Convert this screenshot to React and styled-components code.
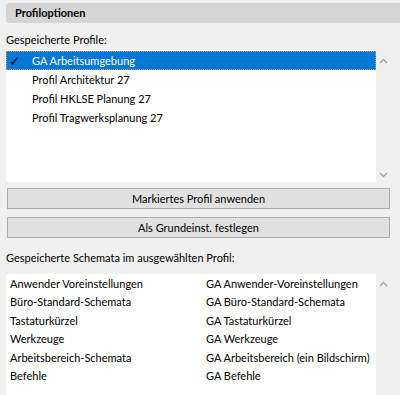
import React from 'react'
import styled, { createGlobalStyle } from 'styled-components'

const GlobalStyle = createGlobalStyle`
  html, body {
    margin: 0;
    background: #f0f0f0;
  }
  body {
    font-family: Lato, "Noto Sans", sans-serif;
    font-size: 11px;
    color: #000;
  }
`

const profiles = [
  'GA Arbeitsumgebung',
  'Profil Architektur 27',
  'Profil HKLSE Planung 27',
  'Profil Tragwerksplanung 27',
]

const schemes = [
  ['Anwender Voreinstellungen', 'GA Anwender-Voreinstellungen'],
  ['Büro-Standard-Schemata', 'GA Büro-Standard-Schemata'],
  ['Tastaturkürzel', 'GA Tastaturkürzel'],
  ['Werkzeuge', 'GA Werkzeuge'],
  ['Arbeitsbereich-Schemata', 'GA Arbeitsbereich (ein Bildschirm)'],
  ['Befehle', 'GA Befehle'],
]

function Chevron({ up }) {
  return (
    <svg width="9" height="6" viewBox="0 0 9 6">
      <path
        d={up ? 'M1 5 L4.5 1.5 L8 5' : 'M1 1 L4.5 4.5 L8 1'}
        fill="none"
        stroke="#a6a6a6"
        strokeWidth="1.4"
      />
    </svg>
  )
}

function App() {
  return (
    <>
      <GlobalStyle />
      <Panel>
        <Header>Profiloptionen</Header>
        <Label>Gespeicherte Profile:</Label>
        <ListFrame height={131}>
          <List>
            {profiles.map((p, i) => (
              <ProfileRow key={p} selected={i === 0}>
                <Check>{i === 0 ? '✓' : ''}</Check>
                {p}
              </ProfileRow>
            ))}
          </List>
          <ScrollBar>
            <Chevron up />
            <Chevron />
          </ScrollBar>
        </ListFrame>
        <Buttons>
          <Button>Markiertes Profil anwenden</Button>
          <Button>Als Grundeinst. festlegen</Button>
        </Buttons>
        <Label second>Gespeicherte Schemata im ausgewählten Profil:</Label>
        <ListFrame height={130} gap={5}>
          <SchemeList>
            {schemes.map(([a, b]) => (
              <React.Fragment key={a}>
                <SchemeCell>{a}</SchemeCell>
                <SchemeCell>{b}</SchemeCell>
              </React.Fragment>
            ))}
          </SchemeList>
          <ScrollBar>
            <Chevron up />
          </ScrollBar>
        </ListFrame>
      </Panel>
    </>
  )
}

export default App

const Panel = styled.div`
  width: 400px;
  height: 395px;
  overflow: hidden;
  padding: 3px 0 0 6px;
  box-sizing: border-box;
`

const Header = styled.div`
  height: 20px;
  background: #d5d5d5;
  border-radius: 3px 0 0 3px;
  font-weight: 700;
  line-height: 19px;
  padding-left: 9px;
`

const Label = styled.div`
  margin-top: ${p => (p.second ? '12px' : '9px')};
  height: 19px;
  line-height: 16px;
`

const ListFrame = styled.div`
  display: flex;
  height: ${p => p.height}px;
  margin-top: ${p => p.gap || 0}px;
`

const List = styled.div`
  width: 370px;
  background: #fff;
`

const ProfileRow = styled.div`
  display: flex;
  align-items: center;
  height: 19px;
  background: ${p => (p.selected ? '#0078d7' : 'transparent')};
  color: ${p => (p.selected ? '#fff' : '#000')};
  outline: ${p => (p.selected ? '1px dotted #d8a060' : 'none')};
  outline-offset: -1px;
`

const Check = styled.span`
  width: 23px;
  padding-left: 3px;
  font-size: 14px;
  color: #000;
  font-family: "DejaVu Sans", sans-serif;
`

const ScrollBar = styled.div`
  width: 15px;
  display: flex;
  flex-direction: column;
  justify-content: space-between;
  align-items: center;
  padding: 7px 0 4px;
  box-sizing: border-box;
`

const Buttons = styled.div`
  display: flex;
  flex-direction: column;
  gap: 8px;
  margin-top: 6px;
  padding: 0 10px 0 1px;
`

const Button = styled.div`
  height: 19px;
  background: #e1e1e1;
  border: 1px solid #adadad;
  text-align: center;
  line-height: 19px;
`

const SchemeList = styled.div`
  width: 370px;
  background: #fff;
  display: grid;
  grid-template-columns: 196px 1fr;
  grid-auto-rows: 18.4px;
  align-content: start;
  padding-top: 1px;
`

const SchemeCell = styled.div`
  padding-left: 4px;
  line-height: 18.4px;
  white-space: nowrap;
`
